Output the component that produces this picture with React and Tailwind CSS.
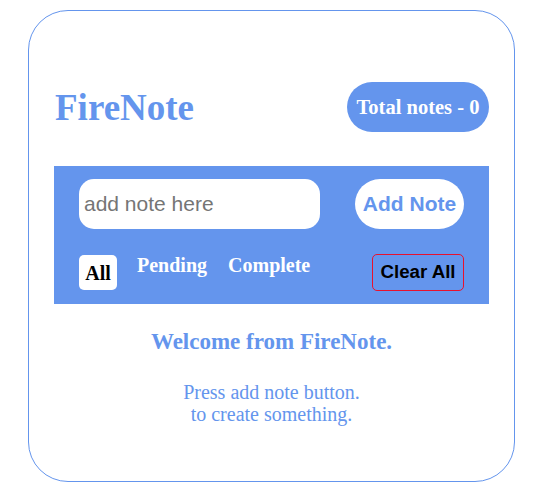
export default function App() {
  const serif = "font-['Liberation_Serif','Times_New_Roman',serif]"
  const sans = "font-['Liberation_Sans',Arial,sans-serif]"

  return (
    <div className="w-[543px] h-[494px] bg-white pt-[10px]">
      {/* Card */}
      <div className="mx-auto w-[487px] h-[472px] border border-[#6495ED] rounded-[40px] px-[25px] pt-[71px]">
        {/* Header */}
        <div className="h-[50px] flex items-center justify-between">
          <h1 className={`${serif} text-[37px] font-bold text-[#6495ED] leading-none pl-[1px]`}>FireNote</h1>
          <div className={`${serif} w-[142px] h-[50px] rounded-full bg-[#6495ED] flex items-center justify-center text-white text-[20.5px] font-bold`}>
            Total notes - 0
          </div>
        </div>

        {/* Input panel */}
        <div className="mt-[34px] h-[138px] bg-[#6495ED] px-[25px] pt-[13px]">
          <div className="flex items-center justify-between">
            <input
              placeholder="add note here"
              className={`${sans} w-[241px] h-[50px] rounded-[15px] bg-white px-[5px] text-[21px] text-black placeholder:text-[#757575] outline-none`}
            />
            <button className={`${sans} w-[109px] h-[50px] rounded-full bg-white text-[#6495ED] text-[21px] font-bold`}>
              Add Note
            </button>
          </div>

          <div className="mt-[25px] flex items-start">
            <button className={`${serif} mt-[1px] w-[38px] h-[35px] rounded-[5px] bg-white text-black text-[20px] font-bold pt-[1px]`}>
              All
            </button>
            <button className={`${serif} ml-[20px] text-white text-[20px] font-bold leading-[23px]`}>Pending</button>
            <button className={`${serif} ml-[21px] text-white text-[20px] font-bold leading-[23px]`}>Complete</button>
            <button className={`${sans} ml-auto w-[92px] h-[37px] rounded-[5px] border border-[#e8112d] text-black text-[18.7px] font-bold`}>
              Clear All
            </button>
          </div>
        </div>

        {/* Empty state */}
        <div className={`${serif} text-center text-[#6495ED]`}>
          <h2 className="mt-[21px] text-[23px] font-bold">Welcome from FireNote.</h2>
          <p className="mt-[21px] text-[20px] leading-[22px]">
            Press add note button.
            <br />
            to create something.
          </p>
        </div>
      </div>
    </div>
  )
}
